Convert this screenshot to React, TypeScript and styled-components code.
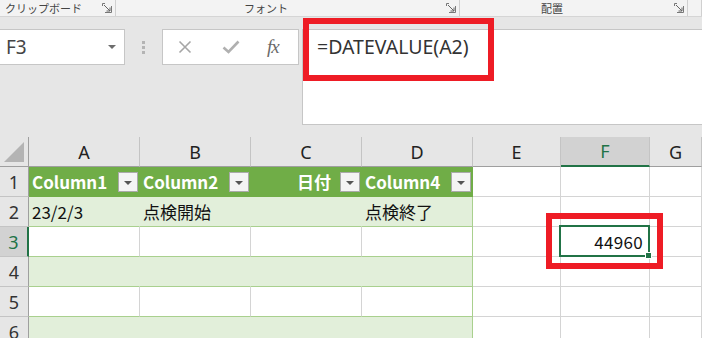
import React from 'react';
import styled, { createGlobalStyle, css } from 'styled-components';

const Global = createGlobalStyle`
  html, body {
    margin: 0;
    padding: 0;
    background: #e6e6e6;
  }
`;

const Page = styled.div`
  width: 702px;
  height: 338px;
  overflow: hidden;
  background: #e6e6e6;
  font-family: "Noto Sans CJK JP", "Noto Sans", sans-serif;
`;

const RibbonLabels = styled.div`
  display: flex;
  height: 16px;
  background: #f3f3f3;
  border-bottom: 1px solid #d5d5d5;
`;

const Group = styled.div<{ $w?: number }>`
  ${(p) => (p.$w ? css`width: ${p.$w}px;` : css`flex: 1;`)}
  flex-shrink: 0;
  display: flex;
  align-items: center;
  border-right: 1px solid #d0d0d0;
  box-sizing: border-box;
  padding-right: 3px;
`;

const GroupLabel = styled.div<{ $left?: boolean }>`
  flex: 1;
  font-size: 11px;
  line-height: 16px;
  color: #444;
  white-space: nowrap;
  text-align: ${(p) => (p.$left ? 'left' : 'center')};
  padding-left: ${(p) => (p.$left ? '5px' : '0')};
  padding-right: ${(p) => (p.$left ? '0' : '30px')};
`;

const Launcher = styled.svg`
  width: 10px;
  height: 10px;
  flex-shrink: 0;
`;

const FormulaRow = styled.div`
  display: flex;
  align-items: flex-start;
  padding-top: 12px;
  height: 95px;
`;

const NameBox = styled.div`
  position: relative;
  width: 126px;
  height: 36px;
  margin-left: -1px;
  box-sizing: border-box;
  background: #fff;
  border: 1px solid #c6c6c6;
  display: flex;
  align-items: center;
  padding-left: 6px;
  font-family: "Noto Sans", sans-serif;
  font-size: 19px;
  color: #444;
`;

const Caret = styled.span`
  margin-left: auto;
  margin-right: 8px;
  width: 0;
  height: 0;
  border-left: 4px solid transparent;
  border-right: 4px solid transparent;
  border-top: 4px solid #6d6d6d;
`;

const Dots = styled.div`
  width: 37px;
  height: 36px;
  display: flex;
  flex-direction: column;
  align-items: center;
  justify-content: center;
  gap: 2px;
  span {
    width: 3px;
    height: 3px;
    background: #b4b4b4;
  }
`;

const FxBox = styled.div`
  width: 137px;
  height: 36px;
  box-sizing: border-box;
  background: #fff;
  border: 1px solid #c6c6c6;
  display: flex;
  align-items: center;
  padding-left: 15px;
  gap: 30px;
`;

const FxText = styled.span`
  font-family: "Liberation Serif", serif;
  font-style: italic;
  font-size: 19px;
  color: #6a6a6a;
  margin-left: -3px;
  letter-spacing: -1px;
`;

const FormulaInput = styled.div`
  position: relative;
  margin-left: 3px;
  flex: 1;
  height: 96px;
  box-sizing: border-box;
  background: #fff;
  border: 1px solid #c6c6c6;
  border-right: none;
  padding: 4px 0 0 14px;
  font-family: "Noto Sans", sans-serif;
  font-size: 19.5px;
  line-height: 26px;
  color: #333;
`;

const RedFrame = styled.div<{ $l: number; $t: number; $w: number; $h: number }>`
  position: absolute;
  left: ${(p) => p.$l}px;
  top: ${(p) => p.$t}px;
  width: ${(p) => p.$w}px;
  height: ${(p) => p.$h}px;
  box-sizing: border-box;
  border: 6px solid #ee1c25;
  pointer-events: none;
  z-index: 5;
`;

const Grid = styled.div`
  margin-top: 13px;
  display: grid;
  grid-template-columns: 29px 111px 111px 111px 111px 88px 89px 1fr;
  grid-auto-rows: 30px;
  background: #fff;
`;

type CellKind = 'head' | 'rowhead' | 'plain' | 'thead' | 'band' | 'twhite';

const Cell = styled.div<{
  $kind: CellKind;
  $sel?: boolean;
  $right?: boolean;
  $edge?: boolean;
}>`
  position: relative;
  box-sizing: border-box;
  display: flex;
  align-items: center;
  font-size: 17px;
  color: #111;
  white-space: nowrap;
  border-right: 1px solid #d4d4d4;
  border-bottom: 1px solid #d4d4d4;
  padding: 0 3px;
  justify-content: ${(p) => (p.$right ? 'flex-end' : 'flex-start')};

  ${(p) =>
    p.$kind === 'head' &&
    css`
      background: ${p.$sel ? '#d2d2d2' : '#e6e6e6'};
      color: ${p.$sel ? '#217346' : '#222'};
      justify-content: center;
      font-family: "Noto Sans", sans-serif;
      font-size: 18px;
      border-right-color: #c4c4c4;
      border-bottom: ${p.$sel ? '2px solid #217346' : '1px solid #9f9f9f'};
    `}
  ${(p) =>
    p.$kind === 'rowhead' &&
    css`
      background: ${p.$sel ? '#d2d2d2' : '#e6e6e6'};
      color: ${p.$sel ? '#217346' : '#333'};
      justify-content: center;
      font-family: "Noto Sans", sans-serif;
      font-size: 18px;
      border-bottom-color: #c4c4c4;
      border-right: ${p.$sel ? '2px solid #217346' : '1px solid #9f9f9f'};
    `}
  ${(p) =>
    p.$kind === 'thead' &&
    css`
      background: #70ad47;
      color: #fff;
      font-weight: 700;
      font-size: 17px;
      border-right-color: #70ad47;
      border-bottom-color: #70ad47;
      padding-right: 1px;
    `}
  ${(p) =>
    p.$kind === 'band' &&
    css`
      background: #e2efda;
      border-right-color: #e2efda;
      border-bottom-color: #a9d08e;
    `}
  ${(p) =>
    p.$kind === 'twhite' &&
    css`
      background: #fff;
      border-bottom-color: #a9d08e;
    `}
  ${(p) =>
    p.$edge &&
    p.$kind !== 'thead' &&
    css`
      border-right-color: #a9d08e;
    `}
`;

const Corner = styled.div`
  width: 0;
  height: 0;
  margin: 4px 0 0 4px;
  border-left: 20px solid transparent;
  border-bottom: 20px solid #b4b4b4;
  align-self: flex-end;
  margin-bottom: 4px;
`;

const CornerCell = styled.div`
  box-sizing: border-box;
  background: #e6e6e6;
  border-right: 1px solid #9f9f9f;
  border-bottom: 1px solid #9f9f9f;
  display: flex;
`;

const FilterBtn = styled.span`
  margin-left: auto;
  width: 20px;
  height: 20px;
  flex-shrink: 0;
  box-sizing: border-box;
  background: #f4f4f4;
  border: 1px solid #aaaaaa;
  display: flex;
  align-items: center;
  justify-content: center;
  &::after {
    content: '';
    border-left: 4px solid transparent;
    border-right: 4px solid transparent;
    border-top: 4px solid #555;
    margin-top: 2px;
  }
`;

const HeadText = styled.span<{ $right?: boolean }>`
  flex: 1;
  text-align: ${(p) => (p.$right ? 'right' : 'left')};
  padding-right: ${(p) => (p.$right ? '9px' : '0')};
`;

const Value = styled.span`
  margin-right: 3px;
  letter-spacing: 0.3px;
`;

const Selection = styled.div`
  position: absolute;
  left: -2px;
  top: -2px;
  right: -1px;
  bottom: -1px;
  border: 2px solid #217346;
  pointer-events: none;
  z-index: 4;
  &::after {
    content: '';
    position: absolute;
    right: -4px;
    bottom: -4px;
    width: 5px;
    height: 5px;
    background: #217346;
    border: 1px solid #fff;
  }
`;

const columns = ['A', 'B', 'C', 'D', 'E', 'F', 'G'];

const tableData: Record<number, string[]> = {
  2: ['23/2/3', '点検開始', '', '点検終了'],
};

const headers = [
  { text: 'Column1' },
  { text: 'Column2' },
  { text: '日付', right: true },
  { text: 'Column4' },
];

const LaunchIcon = () => (
  <Launcher viewBox="0 0 10 10">
    <path d="M0.5 0.5 H3 M0.5 0.5 V3 M9.5 3 V9.5 H3" stroke="#777" fill="none" />
    <path d="M2 2 L8 8 M8 4.5 V8 H4.5" stroke="#666" fill="none" />
  </Launcher>
);

const App: React.FC = () => {
  const rows = [1, 2, 3, 4, 5, 6];

  const renderRow = (r: number) => {
    const cells: React.ReactNode[] = [
      <Cell key={`h${r}`} $kind="rowhead" $sel={r === 3}>
        {r}
      </Cell>,
    ];
    columns.forEach((c, i) => {
      const key = `${c}${r}`;
      if (i < 4) {
        const edge = i === 3;
        if (r === 1) {
          const h = headers[i];
          cells.push(
            <Cell key={key} $kind="thead" $edge={edge}>
              <HeadText $right={h.right}>{h.text}</HeadText>
              <FilterBtn />
            </Cell>
          );
        } else {
          const kind: CellKind = r % 2 === 0 ? 'band' : 'twhite';
          cells.push(
            <Cell key={key} $kind={kind} $edge={edge}>
              {tableData[r]?.[i] ?? ''}
            </Cell>
          );
        }
      } else if (c === 'F' && r === 3) {
        cells.push(
          <Cell key={key} $kind="plain" $right>
            <Value>44960</Value>
            <Selection />
            <RedFrame $l={-15} $t={-14} $w={117} $h={56} />
          </Cell>
        );
      } else {
        cells.push(<Cell key={key} $kind="plain" />);
      }
    });
    return cells;
  };

  return (
    <Page>
      <Global />
      <RibbonLabels>
        <Group $w={116}>
          <GroupLabel $left>クリップボード</GroupLabel>
          <LaunchIcon />
        </Group>
        <Group $w={344}>
          <GroupLabel>フォント</GroupLabel>
          <LaunchIcon />
        </Group>
        <Group $w={228}>
          <GroupLabel>配置</GroupLabel>
          <LaunchIcon />
        </Group>
        <Group />
      </RibbonLabels>

      <FormulaRow>
        <NameBox>
          F3
          <Caret />
        </NameBox>
        <Dots>
          <span />
          <span />
          <span />
        </Dots>
        <FxBox>
          <svg width="14" height="14" viewBox="0 0 14 14">
            <path d="M1.5 1.5 L12.5 12.5 M12.5 1.5 L1.5 12.5" stroke="#a6a6a6" strokeWidth="1.6" />
          </svg>
          <svg width="18" height="14" viewBox="0 0 18 14">
            <path d="M1.5 7.5 L6.5 12 L16.5 1.5" stroke="#b0b0b0" strokeWidth="2.6" fill="none" />
          </svg>
          <FxText>fx</FxText>
        </FxBox>
        <FormulaInput>
          =DATEVALUE(A2)
          <RedFrame $l={0} $t={-12} $w={191} $h={63} />
        </FormulaInput>
      </FormulaRow>

      <Grid>
        <CornerCell>
          <Corner />
        </CornerCell>
        {columns.map((c) => (
          <Cell key={c} $kind="head" $sel={c === 'F'}>
            {c}
          </Cell>
        ))}
        {rows.map(renderRow)}
      </Grid>
    </Page>
  );
};

export default App;
